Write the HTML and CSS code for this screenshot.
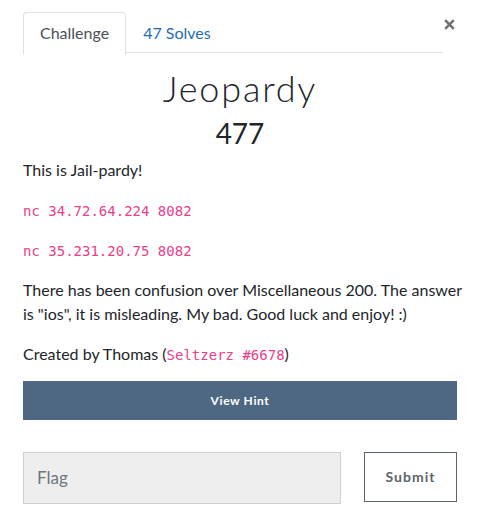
FILE: index.html
```html
<!DOCTYPE html>
<html>
<head>
<meta charset="utf-8">
<link rel="stylesheet" href="styles.css">
</head>
<body>
<div class="modal">
  <div class="header">
    <ul class="tabs">
      <li class="tab active">Challenge</li>
      <li class="tab link">47 Solves</li>
    </ul>
    <button class="close" aria-label="Close">
      <svg width="11" height="11" viewBox="0 0 11 11"><path d="M1.2 1.2 L9.8 9.8 M9.8 1.2 L1.2 9.8" stroke="#717171" stroke-width="2.6" stroke-linecap="butt"/></svg>
    </button>
  </div>
  <h2 class="title">Jeopardy</h2>
  <h3 class="value">477</h3>
  <div class="desc">
    <p>This is Jail-pardy!</p>
    <p><code>nc 34.72.64.224 8082</code></p>
    <p><code>nc 35.231.20.75 8082</code></p>
    <p>There has been confusion over Miscellaneous 200. The answer is "ios", it is misleading. My bad. Good luck and enjoy! :)</p>
    <p>Created by Thomas (<code>Seltzerz #6678</code>)</p>
  </div>
  <button class="hint">View Hint</button>
  <div class="submit-row">
    <input class="flag" type="text" placeholder="Flag">
    <button class="submit">Submit</button>
  </div>
</div>
</body>
</html>
```
FILE: styles.css
```css
html, body {
  margin: 0;
  padding: 0;
  background: #fff;
}
body {
  font-family: Lato, "Noto Sans", sans-serif;
  font-size: 16px;
  line-height: 24px;
  color: #212529;
}
.modal {
  padding: 12px 29px 0 23px;
}
.header {
  display: flex;
  align-items: flex-start;
}
.tabs {
  flex: 1;
  display: flex;
  list-style: none;
  margin: 0;
  padding: 0;
  border-bottom: 1px solid #dee2e6;
  height: 40px;
}
.tab {
  padding: 8px 16px;
  border: 1px solid transparent;
  border-top-left-radius: 4px;
  border-top-right-radius: 4px;
  height: 24px;
  line-height: 24px;
}
.tab.active {
  color: #495057;
  border-color: #dee2e6 #dee2e6 #fff;
  background: #fff;
  height: 25px;
}
.tab.link {
  color: #1e6db3;
}
.close {
  width: 14px;
  height: 14px;
  padding: 0 0 0 1px;
  margin-top: 7px;
  border: 0;
  background: none;
  display: flex;
  align-items: flex-start;
}
.title {
  margin: 14px 0 0;
  text-align: center;
  font-weight: 300;
  font-size: 36px;
  line-height: 1.2;
  letter-spacing: 1.8px;
  color: #212529;
}
.value {
  margin: 7px 0 0;
  text-align: center;
  font-weight: 400;
  font-size: 28px;
  line-height: 1.2;
  color: #212529;
}
.desc {
  margin: 7px -12px 0 0;
}
.desc p {
  margin: 0 0 16px;
  height: auto;
}
code {
  font-family: "DejaVu Sans Mono", monospace;
  font-size: 14px;
  line-height: 14px;
  color: #e83e8c;
}
.hint {
  display: block;
  width: 100%;
  height: 39px;
  margin: -1px 0 0;
  border: 0;
  background: #4e6782;
  color: #fff;
  font-family: Lato, sans-serif;
  font-weight: 700;
  font-size: 12px;
  letter-spacing: 0.6px;
}
.submit-row {
  display: flex;
  align-items: flex-start;
  gap: 23px;
  margin-top: 32px;
}
.flag {
  flex: 1;
  box-sizing: border-box;
  height: 52px;
  margin: 0;
  padding: 0 13px;
  border: 1px solid #c9d0d6;
  background: #eeeeee;
  font-family: Lato, sans-serif;
  font-size: 17px;
  color: #495057;
}
.flag::placeholder {
  color: #6f767c;
}
.submit {
  box-sizing: border-box;
  width: 93px;
  height: 50px;
  margin: 0;
  border: 1px solid #5b656d;
  background: #fff;
  color: #5b646c;
  font-family: Lato, sans-serif;
  font-weight: 700;
  font-size: 14px;
  letter-spacing: 1px;
}
```
